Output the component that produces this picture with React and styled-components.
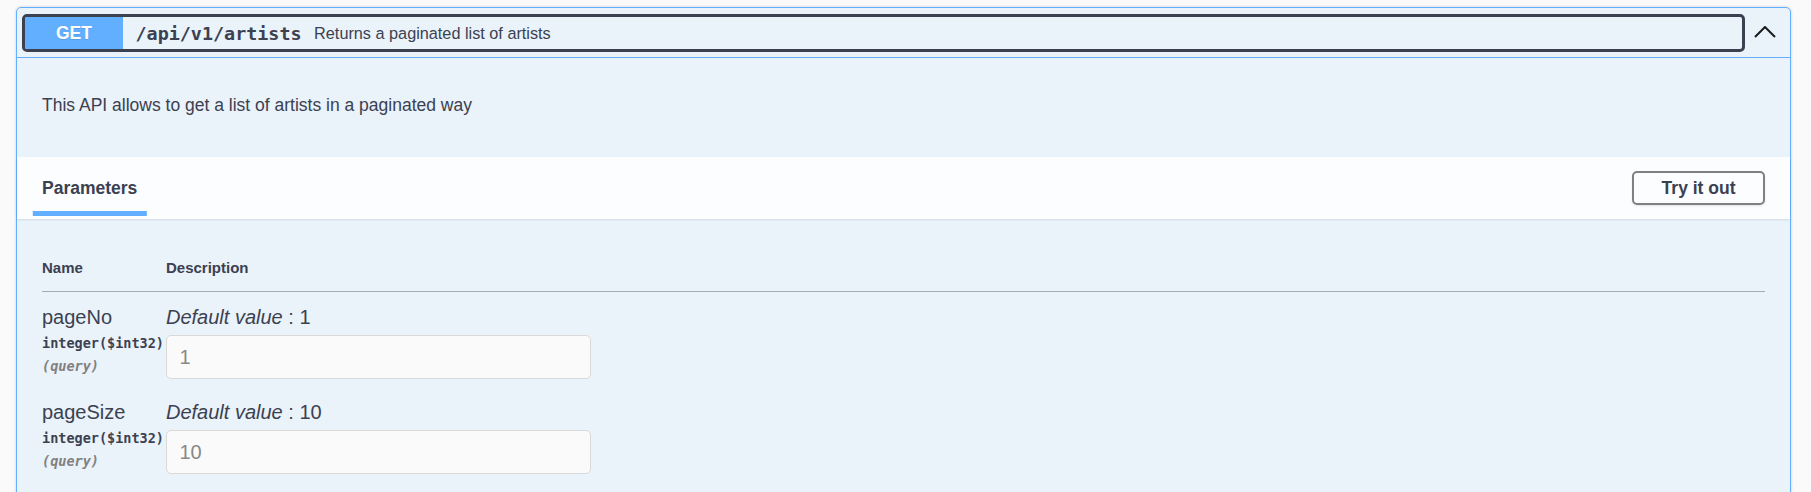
import React from "react";
import styled, { createGlobalStyle } from "styled-components";

const GlobalStyle = createGlobalStyle`
  body {
    margin: 0;
    background: #fafafa;
    color: #3b4151;
    font-family: "Liberation Sans", Arial, sans-serif;
  }
`;

const Page = styled.div`
  box-sizing: border-box;
  height: 492px;
  overflow: hidden;
  padding: 7px 20px 0 16px;
`;

const OpBlock = styled.div`
  border: 1px solid #61affe;
  border-radius: 5px;
  background: rgba(97, 175, 254, 0.1);
  box-shadow: 0 0 3px rgba(0, 0, 0, 0.19);
`;

const Summary = styled.div`
  display: flex;
  align-items: center;
  padding: 6px 0 5px 5px;
  border-bottom: 1px solid #61affe;
`;

const SummaryControl = styled.div`
  flex: 1;
  display: flex;
  align-items: center;
  height: 38px;
  box-sizing: border-box;
  border: 3px solid #3b4151;
  border-radius: 5px;
  overflow: hidden;
`;

const MethodBadge = styled.span`
  align-self: stretch;
  width: 98px;
  display: flex;
  align-items: center;
  justify-content: center;
  background: #61affe;
  color: #fff;
  font-size: 17.5px;
  font-weight: 700;
  text-shadow: 0 1px 0 rgba(0, 0, 0, 0.1);
`;

const PathText = styled.span`
  padding: 0 12.5px;
  font-family: "DejaVu Sans Mono", monospace;
  font-size: 18.4px;
  font-weight: 700;
  color: #3b4151;
`;

const SummaryDescription = styled.span`
  font-size: 16.25px;
  color: #3b4151;
`;

const ArrowButton = styled.button`
  display: flex;
  align-items: center;
  padding: 0 14px 2px 9px;
  border: none;
  background: none;
  cursor: pointer;
`;

const DescriptionWrapper = styled.div`
  padding: 19px 25px;
  margin-bottom: 6px;

  p {
    margin: 17.5px 0;
    font-size: 17.5px;
    line-height: 20px;
    color: #3b4151;
  }
`;

const SectionHeader = styled.div`
  display: flex;
  align-items: center;
  justify-content: space-between;
  box-sizing: border-box;
  min-height: 62px;
  padding: 10px 25px;
  background: rgba(255, 255, 255, 0.8);
  box-shadow: 0 1px 2px rgba(0, 0, 0, 0.1);
`;

const TabTitle = styled.h4`
  margin: 0;
  font-size: 17.5px;
  font-weight: 700;
  color: #3b4151;

  span {
    position: relative;
  }

  span::after {
    content: "";
    position: absolute;
    left: 50%;
    bottom: -18.75px;
    width: 120%;
    height: 5px;
    transform: translateX(-50%);
    background: #61affe;
  }
`;

const TryButton = styled.button`
  height: 34px;
  padding: 0 27.5px;
  border: 2px solid #808080;
  border-radius: 5px;
  background: transparent;
  box-shadow: 0 1px 2px rgba(0, 0, 0, 0.1);
  font-family: "Liberation Sans", Arial, sans-serif;
  font-size: 17.5px;
  font-weight: 700;
  color: #3b4151;
  cursor: pointer;
`;

const TableContainer = styled.div`
  padding: 25px;
`;

const HeaderRow = styled.div`
  display: grid;
  grid-template-columns: 124px 1fr;
  padding: 15px 0;
  border-bottom: 1px solid rgba(59, 65, 81, 0.4);
  font-size: 15px;
  font-weight: 700;
  line-height: 17px;
`;

const Rows = styled.div`
  padding-top: 6px;
`;

const ParamRow = styled.div`
  display: grid;
  grid-template-columns: 124px 1fr;
  padding: 8px 0;
`;

const ParamName = styled.div`
  font-size: 20px;
  line-height: 23px;
`;

const ParamType = styled.div`
  padding: 6px 0;
  font-family: "DejaVu Sans Mono", monospace;
  font-size: 13.5px;
  font-weight: 700;
  line-height: 17px;
  white-space: nowrap;
`;

const ParamIn = styled.div`
  font-family: "DejaVu Sans Mono", monospace;
  font-size: 13.5px;
  font-style: italic;
  font-weight: 600;
  line-height: 17px;
  color: gray;
`;

const DefaultLine = styled.div`
  font-size: 20px;
  line-height: 23px;
`;

const ValueInput = styled.input`
  display: block;
  box-sizing: border-box;
  width: 425px;
  height: 44px;
  margin: 6px 0;
  padding: 0 12.5px;
  border: 1px solid #d9d9d9;
  border-radius: 5px;
  background: #fafafa;
  font-family: "Liberation Sans", Arial, sans-serif;
  font-size: 20px;
  color: #888;
  opacity: 1;
`;

const params = [
  { name: "pageNo", type: "integer($int32)", value: "1" },
  { name: "pageSize", type: "integer($int32)", value: "10" },
];

const App = () => {
  return (
    <Page>
      <GlobalStyle />
      <OpBlock>
        <Summary>
          <SummaryControl>
            <MethodBadge>GET</MethodBadge>
            <PathText>/api/v1/artists</PathText>
            <SummaryDescription>Returns a paginated list of artists</SummaryDescription>
          </SummaryControl>
          <ArrowButton aria-label="collapse">
            <svg width="22" height="12" viewBox="0 0 22 12">
              <polyline points="1,11 11,1 21,11" fill="none" stroke="#1b1b1b" strokeWidth="2" />
            </svg>
          </ArrowButton>
        </Summary>

        <DescriptionWrapper>
          <p>This API allows to get a list of artists in a paginated way</p>
        </DescriptionWrapper>

        <SectionHeader>
          <TabTitle>
            <span>Parameters</span>
          </TabTitle>
          <TryButton>Try it out</TryButton>
        </SectionHeader>

        <TableContainer>
          <HeaderRow>
            <div>Name</div>
            <div>Description</div>
          </HeaderRow>
          <Rows>
            {params.map((p) => (
              <ParamRow key={p.name}>
                <div>
                  <ParamName>{p.name}</ParamName>
                  <ParamType>{p.type}</ParamType>
                  <ParamIn>(query)</ParamIn>
                </div>
                <div>
                  <DefaultLine>
                    <i>Default value</i> : {p.value}
                  </DefaultLine>
                  <ValueInput type="text" disabled value={p.value} readOnly />
                </div>
              </ParamRow>
            ))}
          </Rows>
        </TableContainer>
      </OpBlock>
    </Page>
  );
};

export default App;
